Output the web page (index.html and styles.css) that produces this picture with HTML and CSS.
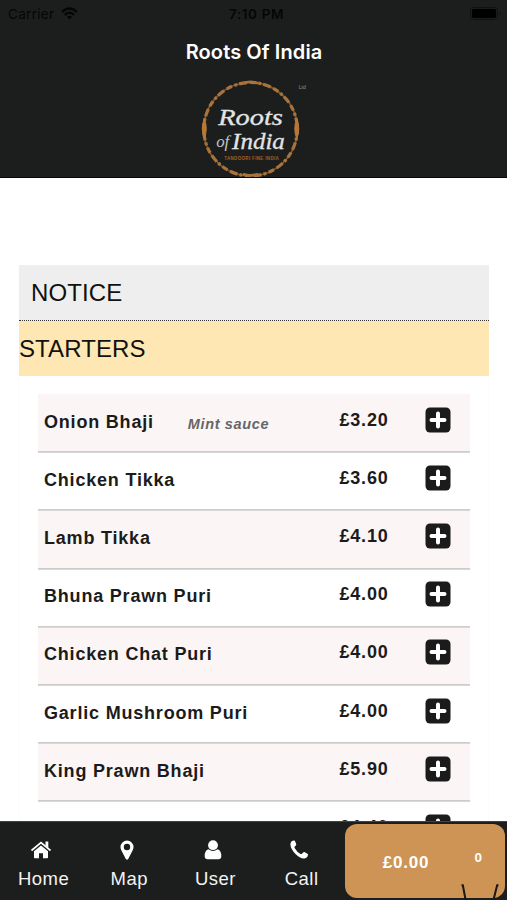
FILE: index.html
```html
<!DOCTYPE html>
<html lang="en">
<head>
    <meta charset="UTF-8">
    <meta name="viewport" content="width=device-width, initial-scale=1.0">
    <title>Roots Of India</title>
    <link rel="stylesheet" href="styles.css">
</head>
<body>
    <svg class="sprite">
        <symbol id="plus" viewBox="0 0 26 26">
            <rect x="0.5" y="0.5" width="25" height="25" rx="4.5" fill="#1b1b1b"/>
            <path d="M13 6.500v13M6.500 13h13" stroke="#fff" stroke-width="4" stroke-linecap="round"/>
        </symbol>
    </svg>

    <header class="header">
        <div class="status-bar">
            <span class="carrier">Carrier
                <svg width="17" height="13" viewBox="0 0 17 13" fill="none" stroke="#050505" stroke-width="2.3">
                    <path d="M1 5Q8.5-2 16 5M3.7 7.8Q8.5 3.4 13.3 7.8"/>
                    <path d="M8.5 12.4L5.9 9.8Q8.5 7.8 11.1 9.8Z" fill="#050505" stroke="none"/>
                </svg>
            </span>
            <span class="clock">7:10 PM</span>
            <svg class="battery" width="32" height="13" viewBox="0 0 32 13">
                <rect x="0.5" y="0.5" width="27" height="12" rx="3" fill="none" stroke="#111"/>
                <rect x="2" y="2" width="24" height="9" rx="1.5" fill="#000"/>
                <path d="M29.5 4.5Q31.5 6.5 29.5 8.5Z" fill="#111"/>
            </svg>
        </div>
        <h1>Roots Of India</h1>
        <svg class="logo" width="120" height="100" viewBox="195 78 120 100">
            <circle cx="250.5" cy="129.500" r="47" fill="none" stroke="#87592c" stroke-width="1.6"/>
            <circle cx="250.5" cy="129.500" r="47" fill="none" stroke="#a8733c" stroke-width="3.2" stroke-dasharray="6 2.5 3 2 8 3"/>
            <path d="M204 119Q200 129 204 139Q208 129 204 119M297 119Q301 129 297 139Q293 129 297 119" fill="#b87937" stroke="#b87937"/>
            <path d="M243 83.500Q250 80 258 83.500M243 174.500Q250 177 258 174.500" fill="none" stroke="#a8733c" stroke-width="2.5"/>
            <text x="218" y="125" class="logo-name" textLength="65" lengthAdjust="spacingAndGlyphs">Roots</text>
            <text x="216" y="147" class="logo-of" textLength="13">of</text>
            <text x="232" y="149" class="logo-name" textLength="53" lengthAdjust="spacingAndGlyphs">India</text>
            <text x="224" y="160.5" class="logo-tag" textLength="55">TANDOORI FINE INDIA</text>
            <text x="299" y="89.5" class="logo-ltd">Ltd</text>
        </svg>
    </header>

    <main class="content">
        <h2 class="notice">NOTICE</h2>
        <h2 class="category">STARTERS</h2>
        <ul class="menu">
            <li>
                <span class="name">Onion Bhaji</span>
                <span class="note">Mint sauce</span>
                <span class="price">£3.20</span>
                <svg class="add"><use href="#plus"/></svg>
            </li>
            <li>
                <span class="name">Chicken Tikka</span>
                <span class="price">£3.60</span>
                <svg class="add"><use href="#plus"/></svg>
            </li>
            <li>
                <span class="name">Lamb Tikka</span>
                <span class="price">£4.10</span>
                <svg class="add"><use href="#plus"/></svg>
            </li>
            <li>
                <span class="name">Bhuna Prawn Puri</span>
                <span class="price">£4.00</span>
                <svg class="add"><use href="#plus"/></svg>
            </li>
            <li>
                <span class="name">Chicken Chat Puri</span>
                <span class="price">£4.00</span>
                <svg class="add"><use href="#plus"/></svg>
            </li>
            <li>
                <span class="name">Garlic Mushroom Puri</span>
                <span class="price">£4.00</span>
                <svg class="add"><use href="#plus"/></svg>
            </li>
            <li>
                <span class="name">King Prawn Bhaji</span>
                <span class="price">£5.90</span>
                <svg class="add"><use href="#plus"/></svg>
            </li>
            <li>
                <span class="price">£4.40</span>
                <svg class="add"><use href="#plus"/></svg>
            </li>
        </ul>
    </main>

    <nav class="tabs">
        <a class="tab">
            <svg width="22" height="22" viewBox="0 0 22 22" fill="#fff">
                <path d="M11 6.400L4 12.200V18.500q0 .8.8.8H9v-5h4v5h4.200q.8 0 .8-.8v-6.300z"/>
                <path d="M1.500 11.500L11 3.500l9.500 8" fill="none" stroke="#fff" stroke-width="1.700"/>
                <path d="M15.500 2.500h2.800v6.200l-2.800-2.300z"/>
            </svg>
            Home
        </a>
        <a class="tab">
            <svg width="22" height="22" viewBox="0 0 22 22" fill="#fff">
                <path fill-rule="evenodd" d="M11 1.500a6.500 6.500 0 0 0-6.500 6.500c0 1.300.3 2.300.8 3.300l4.500 8.600q1.200 1.500 2.400 0l4.500-8.600c.5-1 .8-2 .8-3.300A6.500 6.500 0 0 0 11 1.500zM11 4.800a3.200 3.200 0 1 1 0 6.400a3.200 3.200 0 0 1 0-6.400z"/>
            </svg>
            Map
        </a>
        <a class="tab">
            <svg width="22" height="22" viewBox="0 0 22 22" fill="#fff">
                <circle cx="11" cy="6.200" r="4.900"/>
                <path d="M6.500 10.300Q11 13.700 15.500 10.300Q19.300 11.200 19.300 17.300Q19.300 20.300 16.300 20.300H5.700Q2.700 20.300 2.700 17.300Q2.700 11.200 6.500 10.300z"/>
            </svg>
            User
        </a>
        <a class="tab">
            <svg width="22" height="22" viewBox="0 0 22 22" fill="#fff">
                <path d="M3.600 2.200Q5 1.400 6.500 1.500Q7.200 2 8.300 5.500Q8.300 6.300 6.700 7.600Q6.200 8.200 6.800 9.200Q8.800 12.900 12.500 14.900Q13.300 15.300 14 14.700Q15.500 12.700 16.200 13Q19.900 14.700 20 15.300Q19.800 19.100 16.300 19.500Q12.800 20 8 15.600Q2.600 10.500 2.400 5.600Q2.400 3.300 3.600 2.200z"/>
            </svg>
            Call
        </a>
        <div class="basket">
            <span class="total">£0.00</span>
            <span class="count">0</span>
            <svg class="cart" width="38" height="17" viewBox="0 0 38 17">
                <path d="M0.500 1.200h2M1.800 1l3 16M37.500 1.200h-2M36.200 1l-4 16" fill="none" stroke="#1a1612" stroke-width="2"/>
            </svg>
        </div>
    </nav>
</body>
</html>
```
FILE: styles.css
```css
* {
    box-sizing: border-box;
}
body {
    margin: 0;
    height: 900px;
    display: flex;
    flex-direction: column;
    overflow: hidden;
    background-color: #fff;
    color: #1b1b1b;
    font-family: "Liberation Sans", Arial, sans-serif;
}
h1, h2, ul {
    margin: 0;
    padding: 0;
    font-weight: normal;
}
.sprite {
    display: none;
}
.header {
    flex: none;
    height: 178px;
    background-color: #1c1e1d;
    border-bottom: 1px solid #080808;
    display: flex;
    flex-direction: column;
    align-items: center;
}
.status-bar {
    width: 100%;
    height: 28px;
    padding: 0 5px 0 8px;
    display: grid;
    grid-template-columns: 1fr auto 1fr;
    align-items: center;
    font-family: Inter, sans-serif;
    font-size: 13.5px;
    color: #050505;
}
.carrier {
    display: flex;
    align-items: center;
    gap: 7px;
    letter-spacing: 0.3px;
}
.clock {
    margin-left: 3px;
    font-weight: 600;
    letter-spacing: 0.6px;
}
.battery {
    justify-self: end;
}
h1 {
    height: 50px;
    line-height: 49px;
    padding-left: 1px;
    font-family: Inter, sans-serif;
    font-size: 20px;
    font-weight: 600;
    letter-spacing: 0.1px;
    color: #fff;
}
.logo {
    margin-left: 3px;
}
.logo-name {
    font: italic 23px "Liberation Serif", serif;
    fill: #e4e4e4;
    stroke: #e4e4e4;
    stroke-width: 0.3px;
}
.logo-of {
    font: italic 17px "Liberation Serif", serif;
    fill: #c4c4c4;
}
.logo-tag {
    font: bold 4.5px "Liberation Sans", sans-serif;
    fill: #a85f24;
}
.logo-ltd {
    font: 5px "Liberation Sans", sans-serif;
    fill: #999;
}
.content {
    flex: 1;
    min-height: 0;
    overflow: hidden;
    padding: 87px 18px 0 19px;
}
.notice, .category {
    height: 56px;
    line-height: 55px;
    font-size: 24px;
    letter-spacing: 0.1px;
    color: #111;
}
.notice {
    padding-left: 12px;
    background-color: #eee;
    border-bottom: 1px dotted #333;
}
.category {
    height: 55px;
    background-color: #ffe7b3;
}
.menu {
    padding: 18px 18px 0;
    border-left: 1px solid #fbfbfb;
    border-right: 1px solid #fbfbfb;
    list-style: none;
}
.menu li {
    height: 58.2px;
    padding: 0 19px 2px 6px;
    display: flex;
    align-items: center;
    font-size: 18px;
    font-weight: bold;
    letter-spacing: 0.8px;
}
.menu li + li {
    box-shadow: 0 -1px 0 #ccc, inset 0 1px 0 #d8d8d8;
}
.menu li:nth-child(odd) {
    background-color: #fbf5f5;
}
.note {
    margin: 3px 0 0 34px;
    font-size: 14.5px;
    font-style: italic;
    letter-spacing: 0.65px;
    color: #666;
}
.price {
    width: 85.5px;
    margin: -4px 0 0 auto;
}
.add {
    width: 26px;
    height: 26px;
    margin-top: -5px;
}
.tabs {
    flex: none;
    height: 79px;
    display: flex;
    padding: 2px 2px 0 0;
    background-color: #1c1e1d;
    border-top: 1px solid #444;
}
.tab {
    width: 86.2px;
    padding-top: 15px;
    display: flex;
    flex-direction: column;
    align-items: center;
    gap: 8px;
    line-height: 20px;
    font-size: 18.5px;
    letter-spacing: 0.5px;
    color: #f3f3f3;
}
.tab:first-child {
    padding-left: 1px;
}
.tab svg {
    margin-left: -5px;
}
.basket {
    position: relative;
    flex: 1;
    height: 74px;
    padding: 0 23px 0 38px;
    display: flex;
    align-items: center;
    justify-content: space-between;
    border-radius: 12px;
    background-color: #cd9455;
    color: #fff;
    font-weight: bold;
}
.total {
    padding-top: 3px;
    font-size: 17px;
    letter-spacing: 0.8px;
}
.count {
    padding-bottom: 8px;
    font-size: 13.5px;
}
.cart {
    position: absolute;
    right: 6px;
    bottom: -3px;
}
```
